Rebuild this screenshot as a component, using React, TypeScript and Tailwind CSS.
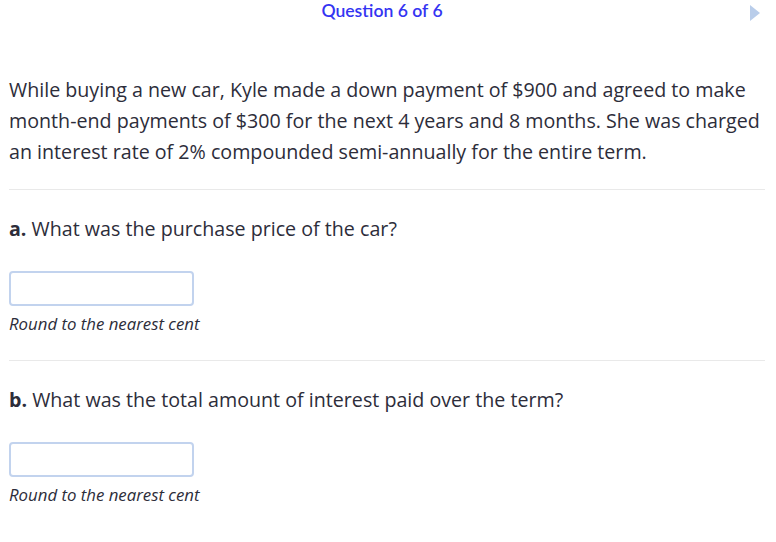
import React from 'react';

function Question({ label, text }: { label: string; text: string }) {
  return (
    <div className="border-t border-[#e9e9e9]">
      <p className="mt-[24px] text-[19.66px] leading-[30px]">
        <span className="font-bold">{label}</span> {text}
      </p>
      <div className="mt-[27px] h-[35px] w-[185px] rounded-[4px] border-2 border-[#c2d3ee] bg-white" />
      <p className="mt-[7px] text-[16.8px] italic leading-[22px]">Round to the nearest cent</p>
    </div>
  );
}

export default function App() {
  return (
    <div className="min-h-[542px] w-[776px] bg-white font-['Open_Sans',sans-serif] text-[#2d2d3a]">
      <header className="relative h-[24px]">
        <h1 className="pr-[12px] text-center font-['Lato',sans-serif] text-[17.6px] font-semibold leading-[22px] text-[#3434f2]">
          Question 6 of 6
        </h1>
        <svg className="absolute right-[16px] top-[5px]" width="10" height="16" viewBox="0 0 10 16">
          <path d="M0 0 L10 8 L0 16 Z" fill="#b9cdea" />
        </svg>
      </header>
      <div className="px-[9px] pr-[11px]">
        <p className="mt-[50px] text-[19.66px] leading-[31px]">
          While buying a new car, Kyle made a down payment of $900 and agreed to make month-end payments of $300 for the next 4 years and 8 months. She was charged an interest rate of 2% compounded semi-annually for the entire term.
        </p>
        <div className="mt-[22px] flex flex-col gap-[25px]">
          <Question label="a." text="What was the purchase price of the car?" />
          <Question label="b." text="What was the total amount of interest paid over the term?" />
        </div>
      </div>
    </div>
  );
}
